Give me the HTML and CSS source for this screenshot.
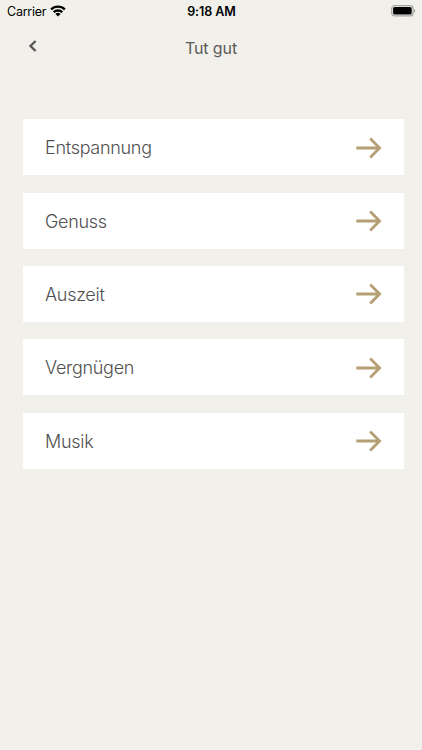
FILE: index.html
```html
<!DOCTYPE html>
<html lang="de">
<head>
<meta charset="utf-8">
<title>Tut gut</title>
<link rel="stylesheet" href="styles.css">
</head>
<body>
<svg class="defs" width="0" height="0"><symbol id="arrow" viewBox="0 0 28 24"><path d="M2.3 12H26M16.2 2.5L25.6 12L16.2 21.5"/></symbol></svg>
<div class="status">
  <div class="carrier"><span>Carrier</span>
    <svg width="16" height="12" viewBox="0 0 16 12"><path d="M1.1 4.5A9.8 9.8 0 0 1 14.9 4.5M3.7 7.2A6.2 6.2 0 0 1 12.3 7.2" fill="none" stroke="#000" stroke-width="2.4"/><path d="M5.4 9A3.6 3.6 0 0 1 10.6 9L8 11.6Z"/></svg>
  </div>
  <time>9:18 AM</time>
  <div class="battery"><svg width="25" height="12" viewBox="0 0 25 12"><rect x=".7" y=".7" width="21.4" height="10.2" rx="3" fill="none" stroke="#a2a2a0" stroke-width="1.2"/><rect x="2.1" y="2.1" width="18.6" height="7.4" rx="1.6"/><path d="M23.2 4Q25.2 5.8 23.2 7.6Z" fill="#8c8c89"/></svg></div>
</div>
<header>
  <svg class="back" width="10" height="14" viewBox="0 0 10 14"><path d="M7.6 2L2.5 7L7.6 12"/></svg>
  <h1>Tut gut</h1>
</header>
<main>
  <a class="card"><span>Entspannung</span><svg class="arrow"><use href="#arrow"/></svg></a>
  <a class="card"><span>Genuss</span><svg class="arrow"><use href="#arrow"/></svg></a>
  <a class="card"><span>Auszeit</span><svg class="arrow"><use href="#arrow"/></svg></a>
  <a class="card"><span>Vergnügen</span><svg class="arrow"><use href="#arrow"/></svg></a>
  <a class="card"><span>Musik</span><svg class="arrow"><use href="#arrow"/></svg></a>
</main>
</body>
</html>
```
FILE: styles.css
```css
* { box-sizing: border-box; }
body { margin: 0; height: 750px; background: #f1f0eb; font-family: Inter, sans-serif; color: #505050; overflow: hidden; }
.defs { display: block; }
.status { height: 22px; display: grid; grid-template-columns: 1fr auto 1fr; align-items: center; padding: 0 6px 0 7px; font-size: 12.5px; color: #000; }
.status svg { display: block; }
.carrier { display: flex; align-items: center; gap: 4px; letter-spacing: -.25px; }
time { font-weight: 600; letter-spacing: -.05px; }
.battery { display: flex; justify-content: flex-end; }
header { height: 97.4px; padding: 15px 28px 0; display: grid; grid-template-columns: 10px 1fr 10px; align-items: start; }
.back { margin-top: 2px; fill: none; stroke: #555; stroke-width: 2.3; }
h1 { margin: 0; font-size: 16px; font-weight: 400; line-height: 22px; text-align: center; letter-spacing: -.1px; color: #5a5a59; }
main { display: grid; gap: 17.3px; padding: 0 18.4px 0 23px; }
.card { height: 56px; background: #fff; display: flex; align-items: center; justify-content: space-between; padding: 1px 21.6px 0 22px; font-size: 18px; font-weight: 300; letter-spacing: -.29px; }
.arrow { width: 28px; height: 24px; fill: none; stroke: #b59f74; stroke-width: 2.8; stroke-linejoin: miter; }
```
